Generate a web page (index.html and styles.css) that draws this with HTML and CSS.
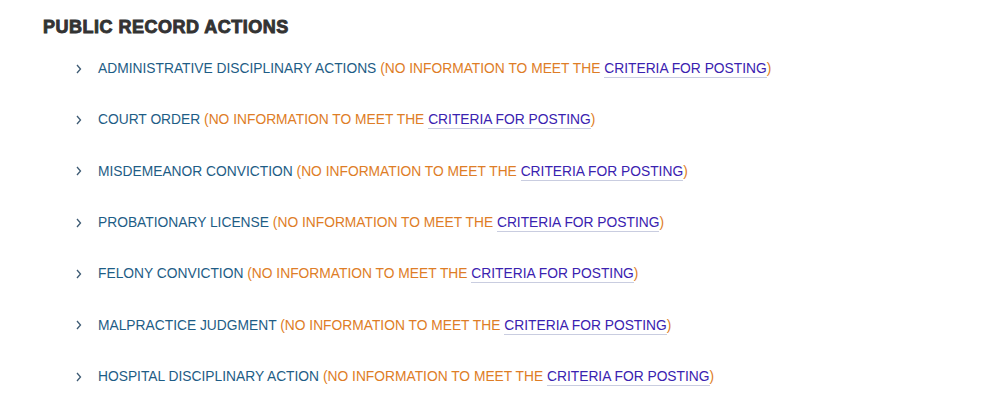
FILE: index.html
```html
<!DOCTYPE html>
<html>
<head>
<meta charset="utf-8">
<link rel="stylesheet" href="styles.css">
</head>
<body>
<section class="pra">
  <h2 class="pra-title">PUBLIC RECORD ACTIONS</h2>
  <ul class="pra-list">
    <li class="pra-item"><svg class="chev" width="6" height="10" viewBox="0 0 6 10"><path d="M1 1 L4.5 5 L1 9" fill="none" stroke="#3d5a73" stroke-width="1.3"/></svg><span class="line"><span class="name">ADMINISTRATIVE DISCIPLINARY ACTIONS</span> <span class="note">(NO INFORMATION TO MEET THE <a class="crit" href="#">CRITERIA FOR POSTING</a>)</span></span></li>
    <li class="pra-item"><svg class="chev" width="6" height="10" viewBox="0 0 6 10"><path d="M1 1 L4.5 5 L1 9" fill="none" stroke="#3d5a73" stroke-width="1.3"/></svg><span class="line"><span class="name">COURT ORDER</span> <span class="note">(NO INFORMATION TO MEET THE <a class="crit" href="#">CRITERIA FOR POSTING</a>)</span></span></li>
    <li class="pra-item"><svg class="chev" width="6" height="10" viewBox="0 0 6 10"><path d="M1 1 L4.5 5 L1 9" fill="none" stroke="#3d5a73" stroke-width="1.3"/></svg><span class="line"><span class="name">MISDEMEANOR CONVICTION</span> <span class="note">(NO INFORMATION TO MEET THE <a class="crit" href="#">CRITERIA FOR POSTING</a>)</span></span></li>
    <li class="pra-item"><svg class="chev" width="6" height="10" viewBox="0 0 6 10"><path d="M1 1 L4.5 5 L1 9" fill="none" stroke="#3d5a73" stroke-width="1.3"/></svg><span class="line"><span class="name">PROBATIONARY LICENSE</span> <span class="note">(NO INFORMATION TO MEET THE <a class="crit" href="#">CRITERIA FOR POSTING</a>)</span></span></li>
    <li class="pra-item"><svg class="chev" width="6" height="10" viewBox="0 0 6 10"><path d="M1 1 L4.5 5 L1 9" fill="none" stroke="#3d5a73" stroke-width="1.3"/></svg><span class="line"><span class="name">FELONY CONVICTION</span> <span class="note">(NO INFORMATION TO MEET THE <a class="crit" href="#">CRITERIA FOR POSTING</a>)</span></span></li>
    <li class="pra-item"><svg class="chev" width="6" height="10" viewBox="0 0 6 10"><path d="M1 1 L4.5 5 L1 9" fill="none" stroke="#3d5a73" stroke-width="1.3"/></svg><span class="line"><span class="name">MALPRACTICE JUDGMENT</span> <span class="note">(NO INFORMATION TO MEET THE <a class="crit" href="#">CRITERIA FOR POSTING</a>)</span></span></li>
    <li class="pra-item"><svg class="chev" width="6" height="10" viewBox="0 0 6 10"><path d="M1 1 L4.5 5 L1 9" fill="none" stroke="#3d5a73" stroke-width="1.3"/></svg><span class="line"><span class="name">HOSPITAL DISCIPLINARY ACTION</span> <span class="note">(NO INFORMATION TO MEET THE <a class="crit" href="#">CRITERIA FOR POSTING</a>)</span></span></li>
  </ul>
</section>
</body>
</html>
```
FILE: styles.css
```css
html, body {
  margin: 0;
  padding: 0;
  background: #ffffff;
}
body {
  font-family: "Liberation Sans", Arial, sans-serif;
}
.pra {
  padding: 17px 0 0 43px;
}
.pra-title {
  margin: 0;
  font-size: 18px;
  line-height: 20px;
  font-weight: 700;
  letter-spacing: 0.5px;
  color: #333333;
  -webkit-text-stroke: 0.9px #333333;
}
.pra-list {
  list-style: none;
  margin: 6px 0 0 0;
  padding: 0 0 0 33px;
}
.pra-item {
  display: flex;
  align-items: center;
  height: 51.33px;
  font-size: 13.8px;
}
.line {
  white-space: nowrap;
}
.chev {
  display: block;
  margin-right: 16px;
  flex: none;
}
.name {
  color: #1e5d86;
}
.note {
  color: #de7d26;
}
.crit {
  color: #3a22b0;
  text-decoration: none;
  border-bottom: 1px solid #c9cde0;
  padding-bottom: 1px;
}
```
